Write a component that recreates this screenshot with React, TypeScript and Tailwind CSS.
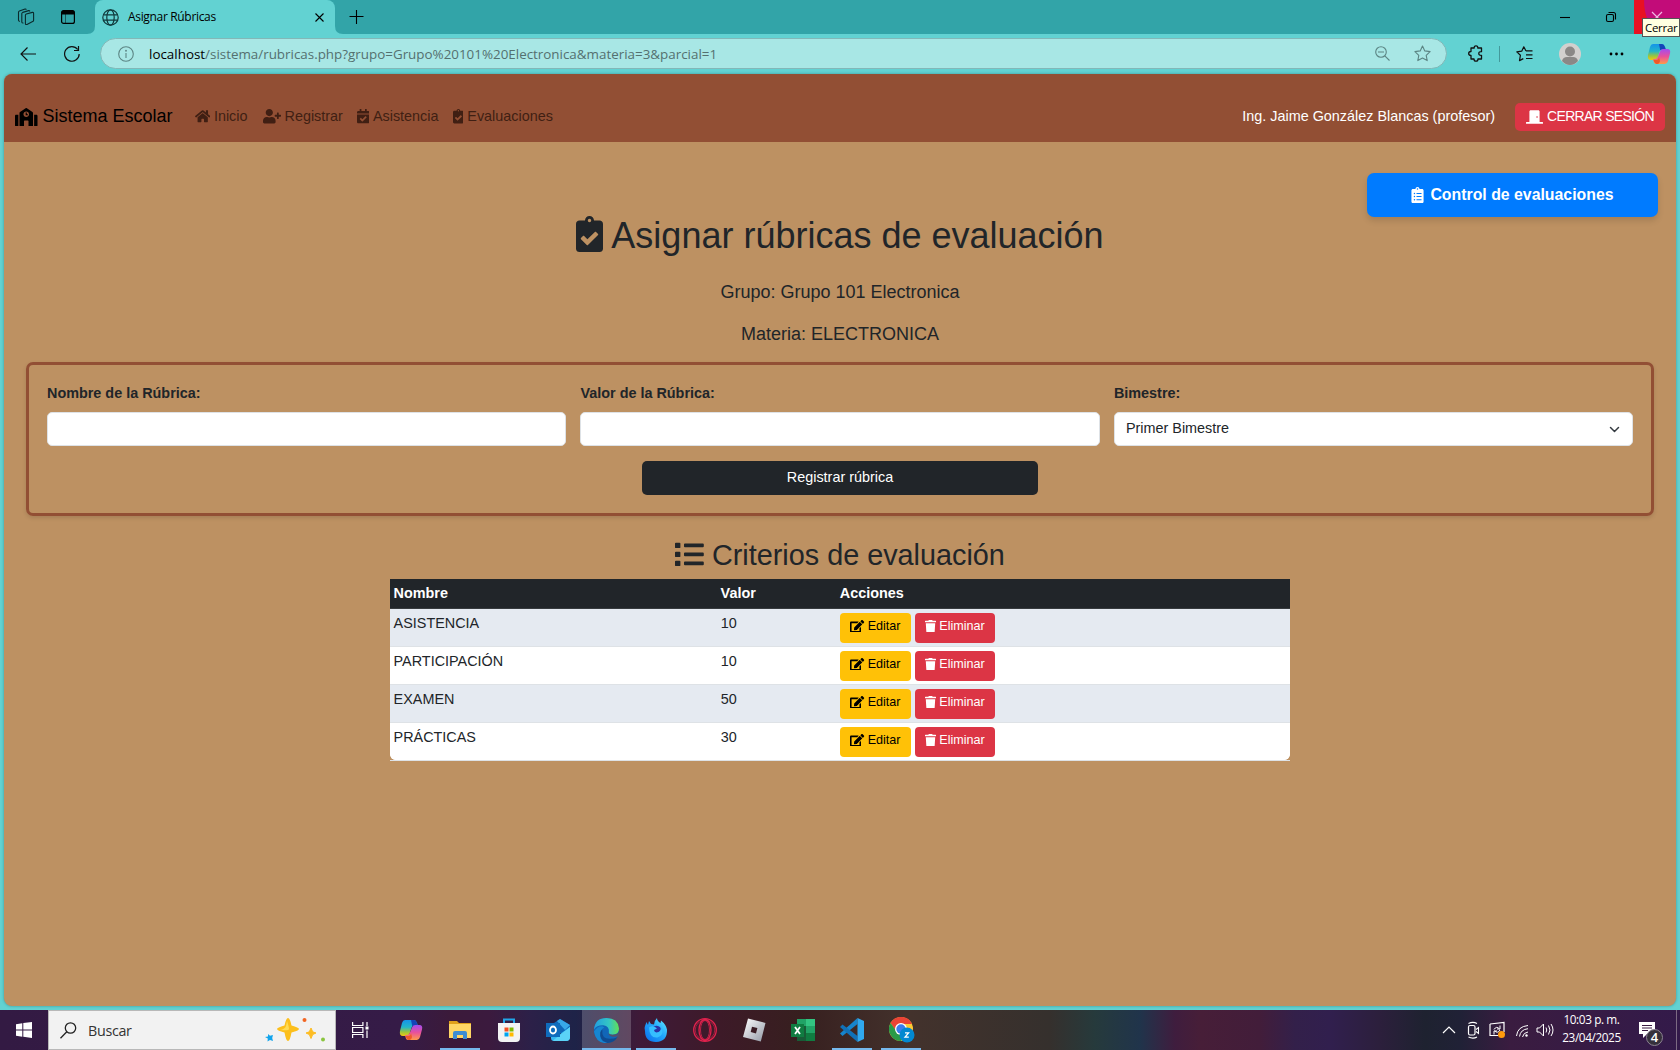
import React from "react";
import {
  FaSchool, FaHome, FaUserPlus, FaCalendarCheck, FaClipboardCheck,
  FaDoorClosed, FaClipboardList, FaList, FaEdit, FaTrash,
} from "react-icons/fa";

const rubrics = [
  { name: "ASISTENCIA", value: 10 },
  { name: "PARTICIPACIÓN", value: 10 },
  { name: "EXAMEN", value: 50 },
  { name: "PRÁCTICAS", value: 30 },
];

function TabBar() {
  return (
    <div className="flex h-[34px] bg-[#32a4a8] text-black">
      <div className="flex w-[95px] items-center pl-[17px]">
        <svg width="18" height="18" viewBox="0 0 18 18" fill="none" stroke="#0a2a2c" strokeWidth="1.1" strokeLinejoin="round" strokeLinecap="round">
          <path d="M9.300 6l6-1.600q1.300-.2 1.300 1v6.800q0 1-1 1.400l-5.600 2.800q-1.600.6-1.600-1V7.200q0-.9.900-1.200z" />
          <path d="M6 15l-.8-.2q-.4-.3-.4-1V5.600q0-.9.900-1.200l6-1.800q.9-.2 1 .5M2.500 13.200l-.6-.3q-.4-.3-.4-1V4.200q0-.9.900-1.200L8 1.100q.9-.2 1 .4" />
        </svg>
        <svg className="ml-[26px]" width="14" height="14" viewBox="0 0 14 14">
          <rect x=".6" y=".6" width="12.800" height="12.800" rx="2" fill="none" stroke="#000" strokeWidth="1.200" />
          <path d="M.6 4.600V2.500Q.6.600 2.500.600h9q1.900 0 1.900 1.900v2.100z" />
          <path d="M4.500 4v9" stroke="#000" strokeWidth="1" opacity=".45" />
        </svg>
      </div>
      <div className="relative flex w-[240px] items-center rounded-t-lg bg-[#62d2d2] pl-[7px]">
        <svg className="absolute bottom-0 -left-2" width="8" height="8"><path d="M8 0v8H0Q8 8 8 0" fill="#62d2d2" /></svg>
        <svg className="absolute -right-2 bottom-0" width="8" height="8"><path d="M0 0v8h8Q0 8 0 0" fill="#62d2d2" /></svg>
        <svg width="17" height="17" viewBox="0 0 17 17" fill="none" stroke="#10393b" strokeWidth="1.200">
          <circle cx="8.500" cy="8.500" r="7.700" />
          <ellipse cx="8.500" cy="8.500" rx="3.700" ry="7.700" />
          <path d="M1.500 5.800h14M1.500 11.200h14" />
        </svg>
        <span className="ml-[9px] w-[180px] whitespace-nowrap font-['Open_Sans',sans-serif] text-[12px] leading-[34px] tracking-[-0.33px]">Asignar Rúbricas</span>
        <svg className="ml-[7px]" width="9" height="9" viewBox="0 0 9 9" stroke="#000" strokeWidth="1.100"><path d="M.5.500l8 8M8.500.500l-8 8" /></svg>
      </div>
      <svg className="ml-[14px] mt-[10px]" width="15" height="14" viewBox="0 0 15 14" stroke="#000" strokeWidth="1.100"><path d="M7.500 0v14M.500 6.500h14" /></svg>
      <div className="relative ml-auto flex w-[120px]">
        <svg width="74" height="34" fill="none" stroke="#000" strokeWidth="1.100">
          <path d="M0 17.500h10" />
          <rect x="46.500" y="14.500" width="7" height="7" rx="1.500" />
          <path d="M48.500 12.500h5q2 0 2 2v5" />
        </svg>
        <svg width="46" height="34">
          <path d="M0 0h46v34H0z" fill="#e81123" />
          <path d="M10 0h36v20H14Q10 12 10 0" fill="#c20c79" />
          <path d="M18 12l10 10M28 12l-10 10" stroke="#f0b8e4" strokeWidth="1.200" />
        </svg>
        <div className="absolute top-[18px] right-0 z-10 h-[19px] w-[38px] border border-[#555] bg-[#ffffe1] pl-[2px] font-['Open_Sans',sans-serif] text-[11.5px] leading-[17px] tracking-[-0.3px]">Cerrar</div>
      </div>
    </div>
  );
}

function CopilotLogo({ id, size }: { id: string; size: number }) {
  return (
    <svg width={size} height={size} viewBox="0 0 24 24">
      <defs>
        <linearGradient id={id + "a"} x1="0" y1="0" x2="0" y2="1"><stop stopColor="#1593ea" /><stop offset=".45" stopColor="#23b5c9" /><stop offset=".75" stopColor="#9cc63c" /><stop offset="1" stopColor="#f2c811" /></linearGradient>
        <linearGradient id={id + "b"} x1="0" y1="0" x2="0" y2="1"><stop stopColor="#a24cf0" /><stop offset=".5" stopColor="#e8519b" /><stop offset="1" stopColor="#ff9a4a" /></linearGradient>
      </defs>
      <path d="M6 2h9q2 0 3 3l.800 2.500h-3.500q-2 0-2.700 2l-2 6q-.800 2.500-3.200 2.500H4Q0 18 1 13L3 5Q3.800 2 6 2" fill={"url(#" + id + "a)"} />
      <path d="M12 2h3q2 0 3 3l.800 2.500h-3.500q-1.200 0-2 1z" fill="#1544b8" />
      <path d="M18 22H9q-2 0-2.500-3L6 17h2q2 0 3-2.500l2-5q.800-2.500 3-2.500h4.500q3.500 0 2.500 4.500L21 19q-.800 3-3 3" fill={"url(#" + id + "b)"} />
      <path d="M6.500 18h3q2 0 2.500-3l1 4q-.500 3-3 3-2.300 0-3.500-4" fill="#f0592a" />
    </svg>
  );
}

function Toolbar() {
  return (
    <div className="mb-px flex h-[39px] items-center bg-[#62d2d2]">
      <svg className="ml-5 shrink-0" width="16" height="14" viewBox="0 0 16 14" fill="none" stroke="#111" strokeWidth="1.150"><path d="M16 7H1M7.500.500L1 7l6.500 6.500" /></svg>
      <svg className="ml-[28px] shrink-0" width="16" height="16" viewBox="0 0 16 16" fill="none" stroke="#111" strokeWidth="1.200"><path d="M15.200 8A7.300 7.300 0 1 1 13.700 3.500M14.500 0v4.500H10" /></svg>
      <div className="ml-[20px] flex h-[31px] w-[1347px] shrink-0 items-center rounded-full border border-[#82b8b8] bg-[#a8e7e5] pl-[17px] pr-[15px]">
        <svg width="16" height="16" viewBox="0 0 16 16" fill="none" stroke="#5c8584" strokeWidth="1.100"><circle cx="8" cy="8" r="7.300" /><path d="M8 7v5" /><circle cx="8" cy="4.800" r=".4" /></svg>
        <span className="ml-[15px] whitespace-nowrap font-['Open_Sans',sans-serif] text-[13.4px] leading-7 text-[#54706f]"><span className="text-black">localhost</span>/sistema/rubricas.php?grupo=Grupo%20101%20Electronica&amp;materia=3&amp;parcial=1</span>
        <svg className="ml-auto" width="15" height="15" viewBox="0 0 15 15" fill="none" stroke="#5c8584" strokeWidth="1.100"><circle cx="6" cy="6" r="5.300" /><path d="M3 6h6M9.800 9.800L14.500 14.500" /></svg>
        <svg className="ml-[24px]" width="17" height="17" viewBox="0 0 17 17" fill="none" stroke="#5c8584" strokeWidth="1.100" strokeLinejoin="round"><path d="M8.500 1l2.300 4.900 5.300.700-3.900 3.700 1 5.300-4.700-2.600-4.700 2.600 1-5.300L.9 6.600l5.300-.7z" /></svg>
      </div>
      <svg className="ml-[21px] shrink-0" width="16" height="17" viewBox="0 0 16 17" fill="none" stroke="#111" strokeWidth="1.300" strokeLinejoin="round"><path d="M3 3h3.200Q6 .8 8 .8t1.800 2.200H13.500v3.700q-2.700-.2-2.700 1.800t2.700 1.800V14H10q0 2.200-2 2.200T6 14H3v-3.500Q.7 10.500.7 8.500T3 6.500z" /></svg>
      <span className="ml-[15px] h-4 w-px shrink-0 bg-[#43999b]" />
      <svg className="ml-[16px] shrink-0" width="17" height="16" viewBox="0 0 17 16" fill="none" stroke="#111" strokeWidth="1.200" strokeLinejoin="round"><path d="M10 5L7.800.800 5.700 5.200.800 5.900l3.600 3.400-.9 5.300 3.800-2M10 4.800h6.500M10 8.800h6.500M10 12.500h6.500" /></svg>
      <svg className="ml-[26px] shrink-0" width="22" height="22" viewBox="0 0 22 22"><circle cx="11" cy="11" r="11" fill="#d2d0ce" /><circle cx="11" cy="8.500" r="5" fill="#8a8886" /><path d="M3 18Q4 14 8 14h6q4 0 5 4-3.500 4-8 4t-8-4" fill="#8a8886" /></svg>
      <svg className="ml-[28px] shrink-0" width="15" height="4"><circle cx="2" cy="2" r="1.400" /><circle cx="7.500" cy="2" r="1.400" /><circle cx="13" cy="2" r="1.400" /></svg>
      <div className="ml-[23px] shrink-0"><CopilotLogo id="bar" size={24} /></div>
    </div>
  );
}

function NavItem({ icon, label, className }: { icon: React.ReactNode; label: string; className: string }) {
  return (
    <a className={"flex items-center whitespace-nowrap text-[14.4px] text-[#401f13] " + className}>
      {icon}<span className="ml-1">{label}</span>
    </a>
  );
}

function Navbar() {
  return (
    <nav className="flex h-[68px] items-center bg-[#924f34] pt-[17px] pr-[11px] pl-[11px]">
      <a className="flex w-[159px] items-center text-[18px] text-black">
        <FaSchool className="h-[18px] w-[22.5px]" /><span className="ml-[5px] whitespace-nowrap">Sistema Escolar</span>
      </a>
      <NavItem className="ml-[20.5px] w-[53px]" icon={<FaHome className="h-[14.4px] w-[16.5px]" />} label="Inicio" />
      <NavItem className="ml-[15px] w-[81px]" icon={<FaUserPlus className="h-[14.4px] w-[18px]" />} label="Registrar" />
      <NavItem className="ml-[13px] w-[82px]" icon={<FaCalendarCheck className="h-[14.4px] w-[12.6px]" />} label="Asistencia" />
      <NavItem className="ml-[14px]" icon={<FaClipboardCheck className="h-[14.4px] w-[10.8px]" />} label="Evaluaciones" />
      <span className="ml-auto text-[14.4px] text-white">Ing. Jaime González Blancas (profesor)</span>
      <button className="ml-[20px] flex h-[28px] w-[150px] items-center justify-center rounded-[5px] bg-[#dc3545] text-[14px] tracking-[-0.7px] whitespace-nowrap text-white">
        <FaDoorClosed className="h-[14px] w-[17px]" /><span className="ml-[4px]">CERRAR SESIÓN</span>
      </button>
    </nav>
  );
}

function RubricForm() {
  const label = "block text-[14.4px] font-bold leading-[22px]";
  const field = "mt-[8px] flex h-[34px] w-full items-center rounded-[5px] border border-[#dee2e6] bg-white";
  return (
    <form className="mx-[22px] mt-[14px] h-[154px] rounded-[7px] border-[3px] border-[#924f34] px-[18px] pt-[17px] shadow-[0_2px_4px_rgba(0,0,0,0.12)]">
      <div className="grid grid-cols-3 gap-[14.4px]">
        <div><label className={label}>Nombre de la Rúbrica:</label><div className={field} /></div>
        <div><label className={label}>Valor de la Rúbrica:</label><div className={field} /></div>
        <div>
          <label className={label}>Bimestre:</label>
          <div className={field + " justify-between pr-[12px] pl-[11px]"}>
            <span className="text-[14.4px]">Primer Bimestre</span>
            <svg width="11" height="7" viewBox="0 0 11 7" fill="none" stroke="#343a40" strokeWidth="1.500" strokeLinecap="round" strokeLinejoin="round"><path d="M1.500 1.500l4 4 4-4" /></svg>
          </div>
        </div>
      </div>
      <button type="button" className="mx-auto mt-[15px] block h-[34px] w-[396px] rounded-[5px] bg-[#212529] pb-px text-[14.4px] text-white">Registrar rúbrica</button>
    </form>
  );
}

function RubricTable() {
  return (
    <div className="mx-auto w-[900px] border-b border-[#dee2e6] text-[14.4px]">
      <div className="overflow-hidden rounded-b-[6px] bg-white">
        <div className="grid h-[30px] grid-cols-[327.600px_119px_1fr] border-b border-[#373b3e] bg-[#212529] leading-[28px] font-bold text-white">
          <span className="pl-[3.600px]">Nombre</span><span className="pl-[3px]">Valor</span><span className="pl-[3.200px]">Acciones</span>
        </div>
        {rubrics.map((r) => (
          <div key={r.name} className="grid h-[38px] grid-cols-[327.600px_119px_1fr] border-b border-[#dee2e6] leading-[22px] last:h-[37px] last:border-b-0 odd:bg-white even:bg-[#e5eaf1]">
            <span className="pt-[3px] pl-[3.600px]">{r.name}</span>
            <span className="pt-[3px] pl-[3.200px]">{r.value}</span>
            <span className="flex gap-1 pt-[4px] pl-[3.400px]">
              <button className="flex h-[30px] w-[71px] items-center justify-center rounded-[4px] bg-[#ffc107] pb-[4px] text-[12.6px] text-black">
                <FaEdit className="h-[12.600px] w-[14.200px]" /><span className="ml-[3px]">Editar</span>
              </button>
              <button className="flex h-[30px] w-[80px] items-center justify-center rounded-[4px] bg-[#dc3545] pb-[4px] text-[12.6px] text-white">
                <FaTrash className="h-[12.600px] w-[11px]" /><span className="ml-[3px]">Eliminar</span>
              </button>
            </span>
          </div>
        ))}
      </div>
    </div>
  );
}

function Page() {
  return (
    <div className="mx-1 h-[932px] overflow-hidden rounded-lg bg-[#bd9162] font-['Liberation_Sans',Arial,sans-serif] text-[#212529] shadow-[0_0_3px_rgba(0,60,60,0.4)]">
      <Navbar />
      <div className="flex justify-end pt-[31px] pr-[18px]">
        <button className="flex h-[44px] w-[291px] items-center justify-center rounded-[7px] bg-[#007bff] text-[15.85px] font-bold text-white shadow-[0_4px_6px_rgba(0,0,0,0.12)]">
          <FaClipboardList className="h-[16.200px] w-[13px]" /><span className="-mt-px ml-[6px]">Control de evaluaciones</span>
        </button>
      </div>
      <h1 className="mt-[-3px] flex h-[43px] items-center justify-center text-[36px] leading-[43px]">
        <FaClipboardCheck className="-mt-[3px] h-[36px] w-[27px]" /><span className="ml-[8px]">Asignar rúbricas de evaluación</span>
      </h1>
      <p className="mt-[22px] text-center text-[18px] leading-[27px]">Grupo: Grupo 101 Electronica</p>
      <p className="mt-[15px] text-center text-[18px] leading-[27px]">Materia: ELECTRONICA</p>
      <RubricForm />
      <h2 className="mt-[22px] mb-[7px] flex h-[34px] items-center justify-center text-[28.8px] leading-[34px]">
        <FaList className="-mt-[2px] h-[28.800px] w-[28.800px]" /><span className="ml-[8px]">Criterios de evaluación</span>
      </h2>
      <RubricTable />
    </div>
  );
}

const appIcons: { name: string; art: React.ReactNode; cell: string; line: string }[] = [
  { name: "copilot", art: <CopilotLogo id="task" size={24} />, cell: "w-[50px] pl-px", line: "" },
  {
    name: "files", cell: "w-[49px]", line: "w-[40px] bg-[#76b9ed]",
    art: <svg width="24" height="24" viewBox="0 0 24 24"><path d="M1 3h8l2 2h12v15H1z" fill="#e0a11b" /><path d="M1 6h22v14H1z" fill="#ffd765" /><path d="M5 21v-6q0-2 2-2h10q2 0 2 2v6h-4v-4H9v4z" fill="#3c8dd3" /></svg>,
  },
  {
    name: "store", cell: "w-[49px]", line: "",
    art: <svg width="24" height="24" viewBox="0 0 24 24"><path d="M7 5V1.500h10V5" fill="none" stroke="#21a6e8" strokeWidth="2" /><path d="M1 5h22v15q0 4-4 4H5q-4 0-4-4z" fill="#f3f3f3" /><path d="M7.500 9.500h4v4h-4z" fill="#f25022" /><path d="M12.500 9.500h4v4h-4z" fill="#7fba00" /><path d="M7.500 14.500h4v4h-4z" fill="#00a4ef" /><path d="M12.500 14.500h4v4h-4z" fill="#ffb900" /></svg>,
  },
  {
    name: "outlook", cell: "w-[49px]", line: "",
    art: <svg width="24" height="24" viewBox="0 0 24 24"><path d="M5 7l9-6 10 6v8H5z" fill="#1067b8" /><path d="M11 3l3-2 10 6-5 5z" fill="#38a8e8" /><path d="M5 11l9 5 10-7v10q0 4-4 4H8q-3 0-3-3z" fill="#35b8f1" /><path d="M24 9L7 22.500q1 .5 2 .5h11q4 0 4-4z" fill="#5bd3f7" /><path d="M0 5h14v14H0z" fill="#0f6cbd" /><ellipse cx="7" cy="12" rx="3" ry="3.500" fill="none" stroke="#fff" strokeWidth="1.800" /></svg>,
  },
  {
    name: "edge", cell: "w-[49px] bg-white/20", line: "w-[49px] bg-[#76b9ed]",
    art: (
      <svg width="25" height="25" viewBox="0 0 24 24">
        <defs><linearGradient id="edgeTop" x1="0" y1=".5" x2="1" y2=".5"><stop stopColor="#229ee0" /><stop offset=".6" stopColor="#34c6c3" /><stop offset="1" stopColor="#62e055" /></linearGradient></defs>
        <circle cx="12" cy="12" r="12" fill="#1166b8" />
        <path d="M0 11Q1 0 12 0q11 0 12 10 0 6-6.500 6-4 0-3.200-2.500Q15 8 9 7 3 6.500 0 11" fill="url(#edgeTop)" />
        <path d="M7.500 11Q3 22 13 24q-11 1-13-11 3-5 8-5l2 1q-2 1-2.500 2" fill="#1686d0" />
        <path d="M8 11q-1 9 7 9 4 0 7.500-1.500Q19 24 13 24 5 22 6 14q.5-2 2-3" fill="#104b90" />
        <path d="M14.300 13.500Q13 17 18 18q4 .500 5-1.500l-.500 2 2 .5v-9q0 6-6.500 6-4 0-3.700-2.500" fill="#54506b" />
      </svg>
    ),
  },
  {
    name: "firefox", cell: "w-[49px]", line: "w-[40px] bg-[#76b9ed]",
    art: <svg width="24" height="24" viewBox="0 0 24 24"><defs><linearGradient id="fox" x1="1" y1="0" x2="0" y2="1"><stop stopColor="#66efff" /><stop offset=".45" stopColor="#22a7fb" /><stop offset="1" stopColor="#086bea" /></linearGradient></defs><path d="M1 8l1.500-4 1.500 3 1-4 2 3 3 .5Q10 3 13 0q0 3 3.500 5l.5-2.500q5 4 6 9 .5 12-11 12.500Q1 24 1 13q-1-3 0-5" fill="url(#fox)" /><circle cx="12.500" cy="13" r="5.300" fill="#2b31a5" /><path d="M5 9.500q3-2 6-.5l2 1.500-3 1.500q.5 3.500 4.500 2 3.500-2 1.500-6 6 8-2.500 11.500-8 1-8.500-10" fill="#35bfff" /></svg>,
  },
  {
    name: "opera", cell: "w-[49px]", line: "",
    art: <svg width="24" height="24" viewBox="0 0 24 24" fill="none" stroke="#e0224d" strokeWidth="1.300"><circle cx="12" cy="12" r="11.300" /><circle cx="12" cy="12" r="9.800" strokeWidth=".6" /><ellipse cx="12" cy="12" rx="6" ry="10.500" /><ellipse cx="12" cy="12" rx="4.500" ry="9.500" strokeWidth=".8" /></svg>,
  },
  {
    name: "roblox", cell: "w-[49px]", line: "",
    art: <svg width="24" height="24" viewBox="0 0 24 24"><defs><linearGradient id="rbx" x1="0" y1="0" x2="1" y2="1"><stop stopColor="#fff" /><stop offset="1" stopColor="#9298a5" /></linearGradient></defs><path d="M6 .5l17.500 4.500-4.700 18.500L1 19zM10 8.700l-1.300 5.300 5.300 1.400 1.400-5.300z" fillRule="evenodd" fill="url(#rbx)" /></svg>,
  },
  {
    name: "excel", cell: "w-[49px]", line: "",
    art: <svg width="24" height="24" viewBox="0 0 24 24"><path d="M6 1h18v22H6z" fill="#21a366" /><path d="M15 1h9v7h-9z" fill="#33c481" /><path d="M6 8h9v15H6z" fill="#185c37" /><path d="M15 15h9v8h-9z" fill="#107c41" /><path d="M0 6h13v13H0z" fill="#107c41" /><path d="M4 9l5 7M9 9l-5 7" stroke="#fff" strokeWidth="1.800" /></svg>,
  },
  {
    name: "code", cell: "w-[49px]", line: "w-[40px] bg-[#76b9ed]",
    art: <svg width="24" height="24" viewBox="0 0 24 24"><path d="M17.500 0v6L2.500 18 0 15.500z" fill="#1684cc" /><path d="M17.500 24v-6L2.500 6.500 0 9z" fill="#1071b8" /><path d="M17.500 0L24 3v18l-6.500 3z" fill="#30a8ee" /></svg>,
  },
  {
    name: "chrome", cell: "w-[49px]", line: "w-[40px] bg-[#76b9ed]",
    art: <svg className="ml-[2px]" width="26" height="26" viewBox="0 0 26 26"><circle cx="12" cy="12" r="12" fill="#fcc934" /><path d="M1.600 6A12 12 0 0 1 23 7H12l-5 7z" fill="#ea4335" /><path d="M1.600 6A12 12 0 0 0 12 24l5-9-9 0z" fill="#2a9a48" /><circle cx="12" cy="12" r="6" fill="#fff" /><circle cx="12" cy="12" r="4.700" fill="#3b7ded" /><circle cx="18" cy="18" r="7.500" fill="#0288d1" /><path d="M16 15.800h3.600L16 20.200h3.800" fill="none" stroke="#fff" strokeWidth="1.300" /></svg>,
  },
];

function Taskbar() {
  return (
    <div className="flex h-10 bg-[linear-gradient(90deg,#331a43_0,#351b47_400px,#3b1a3a_450px,#3b1a3e_490px,#2c2048_530px,#1e2348_575px,#3f1a38_640px,#3d1a28_720px,#371f1f_800px,#43322c_910px,#35302d_1050px,#263a3c_1095px,#20344b_1140px,#3f1d3e_1175px,#471e38_1200px,#421d3a_1260px,#33204a_1295px,#311f4e_1330px,#2c1f3c_1380px,#1e2230_1425px,#202136_1460px,#3a1c40_1510px,#331a4a_1680px)] font-['Open_Sans',sans-serif] text-white">
      <div className="flex w-12 items-center justify-center">
        <svg width="16" height="16" viewBox="0 0 16 16" fill="#fff"><path d="M0 2.200L6.300 1.300V7.500H0zM7.300 1.100L16 0v7.500H7.300zM0 8.500h6.300v6.200L0 13.800zM7.300 8.500H16V16l-8.700-1.200z" /></svg>
      </div>
      <div className="flex w-[288px] items-center border border-[#b8b8b8] bg-[#f2f2f2] pr-[10px] pl-[11px]">
        <svg width="17" height="17" viewBox="0 0 17 17" fill="none" stroke="#222" strokeWidth="1.300"><circle cx="10.500" cy="6" r="5.200" /><path d="M6.800 9.800L.500 16.200" /></svg>
        <span className="ml-[11px] pt-px text-[14.3px] tracking-[-0.3px] text-[#333]">Buscar</span>
        <svg className="ml-auto" width="60" height="26" viewBox="0 0 60 26">
          <path d="M23 1q2 0 3.500 7.500Q34 10.500 34 12t-7.500 3.500Q25 24 23 24t-3.500-8.500Q12 13.500 12 12t7.500-3.500Q21 1 23 1" fill="#fcbf1c" />
          <path d="M22 4q2 6 2 8t-9 1q5-1 6-4" fill="#ffdc55" />
          <path d="M46 11l1.700 3.800L51 16l-3.300 1.500L46 21.500l-1.700-4L41 16l3.300-1.200z" fill="#fdbd24" stroke="#fdbd24" />
          <path d="M3 17l2 1.800 3-.8-.8 3L8 24l-3-1-2.500 1.500.3-3L0 20l3-.5z" fill="#12a4ec" />
          <circle cx="39.500" cy="3" r="2" fill="#f26522" /><circle cx="58" cy="22.500" r="2" fill="#8ac53f" />
        </svg>
      </div>
      <div className="flex w-[49px] items-center justify-center">
        <svg width="17" height="17" viewBox="0 0 17 17" fill="none" stroke="#fff" strokeWidth="1.200"><path d="M.6 0v3.500h10.300V0M.6 16v-3.500h10.300V16M.6 5.500h10.300v5H.6zM15 0v4M15 8.500V16" /><path d="M13.500 4.500h3v3h-3z" fill="#fff" stroke="none" /></svg>
      </div>
      {appIcons.map((a) => (
        <div key={a.name} className={"relative flex h-10 items-center justify-center " + a.cell}>
          {a.art}
          {a.line && <span className={"absolute bottom-0 h-[2px] " + a.line} />}
        </div>
      ))}
      <svg className="ml-auto" width="122" height="40" viewBox="0 0 122 40" fill="none" stroke="#fff" strokeWidth="1.200">
        <path d="M3 23l6-6 6 6" />
        <rect x="28.500" y="15.500" width="6.500" height="9.500" rx="1.500" /><path d="M36 19.500l2.500-2v6l-2.500-2M28.500 13.500q4.500-2.200 8.500 0M28.500 27q4.500 2.200 8.500 0" strokeWidth="1.050" />
        <path d="M50 14l14-1.500V22M50 14v11.500h8" /><path d="M54 19.500q2.500-4 5.500-.5M60 20q-2.500 4-5.500.8M60 15.500v3.500h-3M54 24.500V21h3" strokeWidth="1" />
        <circle cx="61.500" cy="24.500" r="3.500" fill="#ff9a0c" stroke="none" />
        <path d="M76.500 26Q77.500 16.500 88 15.500M79.500 26.500Q80.500 19.500 88 18.700M82.500 27Q83.500 22.500 88 22" strokeWidth="1" /><circle cx="86.500" cy="25.500" r="1.200" fill="#fff" stroke="none" />
        <path d="M97 18h2.500l4-4v12l-4-4H97zM106 17.500q1.500 2.500 0 5M108.500 15.500q3 4.500 0 9M111 14q4 6 0 12" strokeWidth="1" />
      </svg>
      <div className="w-[59px] text-center text-[11.800px] leading-[18px] tracking-[-0.4px] whitespace-nowrap">
        <div>10:03 p. m.</div><div>23/04/2025</div>
      </div>
      <div className="relative ml-[18px] w-[37px]">
        <svg className="mt-[12px]" width="17" height="17" viewBox="0 0 17 17"><path d="M0 0h16v12H8l-4 4v-4H0z" fill="#fff" /><path d="M3 3.500h10M3 6h10M3 8.500h6" stroke="#3a1b42" /></svg>
        <span className="absolute top-[19px] left-[7px] flex h-[17px] w-[17px] items-center justify-center rounded-full border border-[#8c8392] bg-[#35303b] text-[13px] leading-none font-semibold">4</span>
      </div>
      <span className="mr-[3px] w-px bg-[#7c6a83]" />
    </div>
  );
}

export default function App() {
  return (
    <div className="h-[1050px] w-[1680px] overflow-hidden bg-[#62d2d2]">
      <TabBar />
      <Toolbar />
      <Page />
      <div className="h-1" />
      <Taskbar />
    </div>
  );
}
